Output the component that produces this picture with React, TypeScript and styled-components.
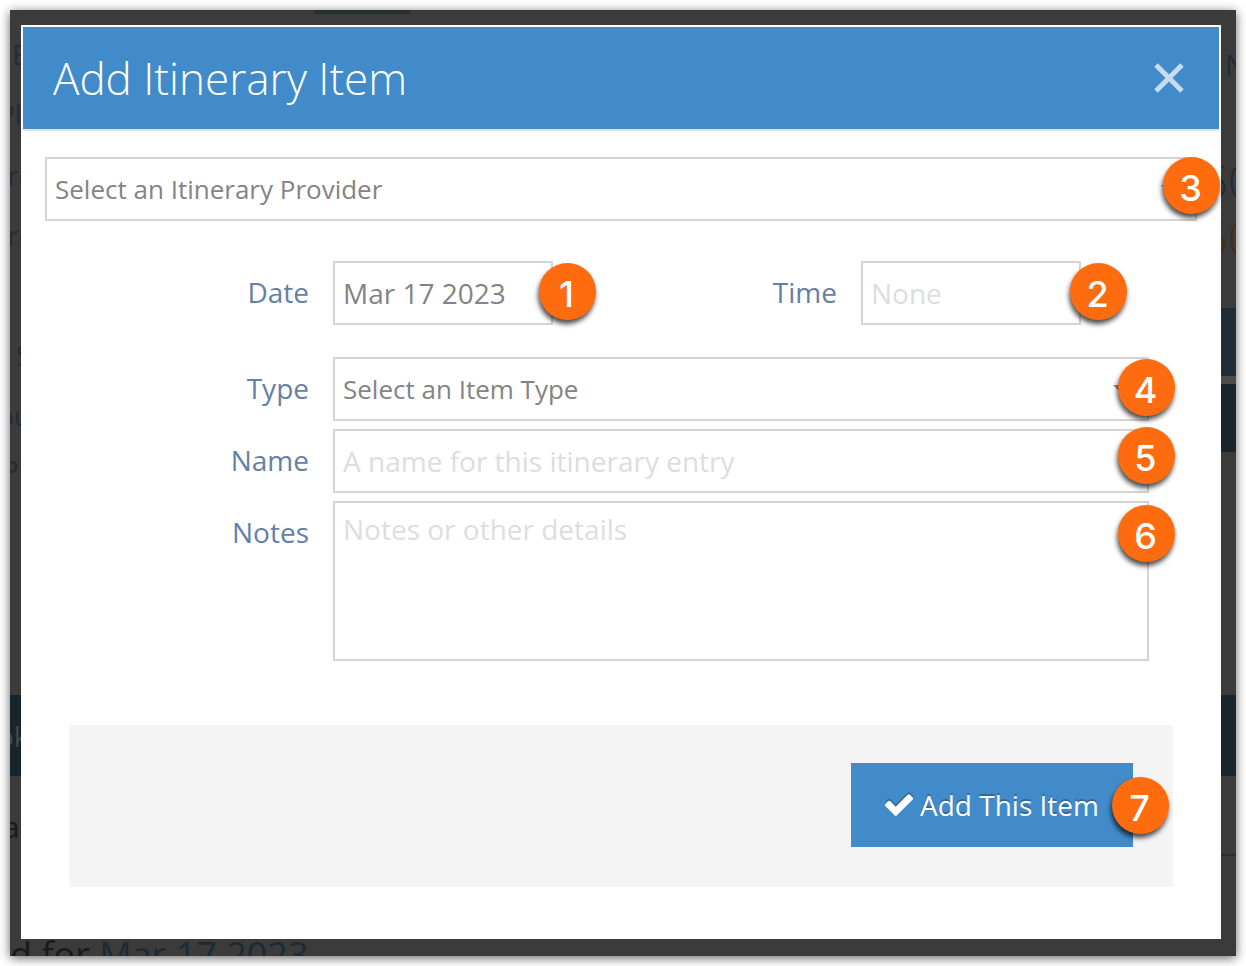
import React from "react";
import styled, { createGlobalStyle } from "styled-components";

const GlobalStyle = createGlobalStyle`
  * { box-sizing: border-box; }
  body {
    margin: 0;
    background: #fff;
    font-family: "Open Sans", "Noto Sans", sans-serif;
  }
`;

const Frame = styled.div`
  position: relative;
  margin: 10px;
  padding: 15px 15px 17px 11px;
  background: #3b3b3b;
  box-shadow: 0 2px 10px rgba(0, 0, 0, 0.6);
`;

/* The dimmed booking page that shows round the edges of the dialog. */
const Backdrop = styled.div`
  position: absolute;
  inset: 0;
  display: flex;
  align-items: flex-start;
  overflow: hidden;
`;

const LeftStrip = styled.div`
  flex: none;
  width: 304px;
  height: 100%;
  overflow: hidden;
`;

const RightStrip = styled.div`
  flex: none;
  width: 16px;
  height: 100%;
  margin-left: auto;
  overflow: hidden;
`;

const DimTab = styled.div`
  width: 96px;
  height: 4px;
  background: #26302d;
`;

const DimLine = styled.div<{ $gap: number; $size?: number; $indent?: number; $tone?: string; $weight?: number }>`
  margin-top: ${(p) => p.$gap}px;
  margin-left: ${(p) => p.$indent ?? 0}px;
  height: 30px;
  line-height: 30px;
  font-size: ${(p) => p.$size ?? 28}px;
  font-weight: ${(p) => p.$weight ?? 400};
  color: ${(p) => p.$tone ?? "#1e2d38"};
  white-space: nowrap;
`;

const DimBand = styled.div<{ $gap: number; $height: number; $tone: string }>`
  display: flex;
  align-items: center;
  margin-top: ${(p) => p.$gap}px;
  height: ${(p) => p.$height}px;
  background: ${(p) => p.$tone};
`;

const DimLink = styled.span`
  color: #1b2a35;
`;

const Dialog = styled.section`
  position: relative;
  border: 2px solid #fff;
  background: #fff;
`;

const Header = styled.header`
  display: flex;
  align-items: center;
  justify-content: space-between;
  height: 104px;
  padding: 0 32px 0 30px;
  background: #428bca;
  border-bottom: 2px solid #dde5ec;
`;

const Title = styled.h1`
  margin: 0;
  color: #fff;
  font-size: 44px;
  font-weight: 300;
  line-height: 60px;
`;

const CloseButton = styled.button`
  display: flex;
  padding: 0;
  border: 0;
  background: none;
  cursor: pointer;
`;

const Form = styled.form`
  padding: 26px 22px 50px;
`;

const FieldBox = styled.div<{ $width?: number }>`
  position: relative;
  display: flex;
  flex: ${(p) => (p.$width ? `0 0 ${p.$width}px` : "1 1 0")};
  min-width: 0;
`;

const Control = styled.input`
  width: 100%;
  height: 64px;
  padding: 0 8px;
  border: 2px solid #d4d4d4;
  border-radius: 0;
  background: #fff;
  color: #848484;
  font-family: inherit;
  font-size: 28px;
  outline: 0;
  &::placeholder { color: #dcdede; opacity: 1; }
`;

const Select = styled(Control).attrs({ as: "select" })`
  appearance: none;
  font-size: 26px;
`;

const TextArea = styled(Control).attrs({ as: "textarea" })`
  display: block;
  height: 160px;
  padding-top: 6px;
  line-height: 40px;
  resize: none;
`;

const Caret = styled.span`
  position: absolute;
  top: 28px;
  right: 20px;
  border: 8px solid transparent;
  border-top-color: #888;
  border-bottom: 0;
  pointer-events: none;
`;

const Badge = styled.span<{ $top: number; $right: number }>`
  position: absolute;
  top: ${(p) => p.$top}px;
  right: ${(p) => p.$right}px;
  z-index: 1;
  width: 57px;
  height: 57px;
  padding-right: 2px;
  border-radius: 50%;
  background: #ff6c0f;
  box-shadow: -1px 4px 5px rgba(0, 0, 0, 0.7);
  color: #fff;
  font: 500 36px/62px Inter, "Liberation Sans", sans-serif;
  text-align: center;
  pointer-events: none;
`;

const Row = styled.div<{ $gap: number; $end: number }>`
  display: flex;
  align-items: flex-start;
  margin-top: ${(p) => p.$gap}px;
  padding-right: ${(p) => p.$end}px;
`;

const Label = styled.label<{ $fill?: boolean }>`
  flex: ${(p) => (p.$fill ? "1 1 0" : "0 0 288px")};
  padding-right: 24px;
  color: #6480a6;
  font-size: 28px;
  line-height: 62px;
  text-align: right;
`;

const Footer = styled.footer`
  display: flex;
  justify-content: flex-end;
  margin: 64px 24px 0;
  padding: 38px 40px 40px;
  background: #f4f4f4;
`;

const SubmitBox = styled.div`
  position: relative;
`;

const SubmitButton = styled.button`
  display: flex;
  align-items: center;
  justify-content: center;
  gap: 7px;
  width: 282px;
  height: 84px;
  padding: 0;
  border: 0;
  background: #428bca;
  color: #fff;
  font-family: inherit;
  font-size: 28px;
  text-shadow: 0 -2px 0 rgba(0, 0, 0, 0.25);
  cursor: pointer;
  svg { filter: drop-shadow(0 -2px 0 rgba(0, 0, 0, 0.25)); }
`;

function PageBehind() {
  return (
    <Backdrop aria-hidden="true">
      <LeftStrip>
        <DimLine $gap={29} $indent={2}>E</DimLine>
        <DimLine $gap={30} $indent={-12}>Pl</DimLine>
        <DimLine $gap={31} $indent={-3}>re</DimLine>
        <DimLine $gap={30} $indent={-3}>re</DimLine>
        <DimLine $gap={90} $indent={6}>S</DimLine>
        <DimLine $gap={30} $indent={-13}>ou</DimLine>
        <DimLine $gap={25} $indent={-8}>P</DimLine>
        <DimBand $gap={210} $height={81} $tone="#18252c">
          <DimLine $gap={0} $indent={-13} $tone="#3f4a50">ok</DimLine>
        </DimBand>
        <DimLine $gap={36} $indent={-7} $size={30} $tone="#1a1a1a">a</DimLine>
        <DimLine $gap={98} $size={36} $tone="#1a1a1a">
          d for <DimLink>Mar 17 2023</DimLink>
        </DimLine>
      </LeftStrip>
      <DimTab />
      <RightStrip>
        <DimLine $gap={39} $indent={5}>N</DimLine>
        <DimLine $gap={87} $indent={-17} $size={44} $weight={300}>50</DimLine>
        <DimLine $gap={27} $indent={-17} $size={44} $weight={300} $tone="#4a2a17">50</DimLine>
        <DimBand $gap={55} $height={68} $tone="#212d36" />
        <DimBand $gap={0} $height={8} $tone="#4b4b4b" />
        <DimBand $gap={0} $height={68} $tone="#18252b" />
        <DimBand $gap={243} $height={81} $tone="#18252c" />
        <DimBand $gap={78} $height={2} $tone="#2b302f" />
      </RightStrip>
    </Backdrop>
  );
}

export default function App() {
  return (
    <>
      <GlobalStyle />
      <Frame>
        <PageBehind />
        <Dialog role="dialog" aria-labelledby="dialog-title">
          <Header>
            <Title id="dialog-title">Add Itinerary Item</Title>
            <CloseButton type="button" aria-label="Close">
              <svg width="36" height="36" viewBox="0 0 36 36" stroke="#c6dcef" strokeWidth="5">
                <path d="M5 5 31 31M31 5 5 31" />
              </svg>
            </CloseButton>
          </Header>
          <Form onSubmit={(e: React.FormEvent) => e.preventDefault()}>
            <FieldBox>
              <Select aria-label="Itinerary provider">
                <option>Select an Itinerary Provider</option>
              </Select>
              <Caret />
              <Badge $top={0} $right={-23}>3</Badge>
            </FieldBox>
            <Row $gap={40} $end={116}>
              <Label htmlFor="date">Date</Label>
              <FieldBox $width={220}>
                <Control id="date" defaultValue="Mar 17 2023" />
                <Badge $top={2} $right={-43}>1</Badge>
              </FieldBox>
              <Label htmlFor="time" $fill>Time</Label>
              <FieldBox $width={220}>
                <Control id="time" placeholder="None" />
                <Badge $top={2} $right={-46}>2</Badge>
              </FieldBox>
            </Row>
            <Row $gap={32} $end={48}>
              <Label htmlFor="type">Type</Label>
              <FieldBox>
                <Select id="type">
                  <option>Select an Item Type</option>
                </Select>
                <Caret />
                <Badge $top={2} $right={-26}>4</Badge>
              </FieldBox>
            </Row>
            <Row $gap={8} $end={48}>
              <Label htmlFor="name">Name</Label>
              <FieldBox>
                <Control id="name" placeholder="A name for this itinerary entry" />
                <Badge $top={-2} $right={-26}>5</Badge>
              </FieldBox>
            </Row>
            <Row $gap={8} $end={48}>
              <Label htmlFor="notes">Notes</Label>
              <FieldBox>
                <TextArea id="notes" placeholder="Notes or other details" />
                <Badge $top={4} $right={-26}>6</Badge>
              </FieldBox>
            </Row>
            <Footer>
              <SubmitBox>
                <SubmitButton type="submit">
                  <svg width="28" height="22" viewBox="121 334 1550 1188" fill="#fff">
                    <path d="M1671 566q0 40-28 68l-724 724-136 136q-28 28-68 28t-68-28l-136-136-362-362q-28-28-28-68t28-68l136-136q28-28 68-28t68 28l294 295 656-657q28-28 68-28t68 28l136 136q28 28 28 68z" />
                  </svg>
                  Add This Item
                </SubmitButton>
                <Badge $top={14} $right={-36}>7</Badge>
              </SubmitBox>
            </Footer>
          </Form>
        </Dialog>
      </Frame>
    </>
  );
}
